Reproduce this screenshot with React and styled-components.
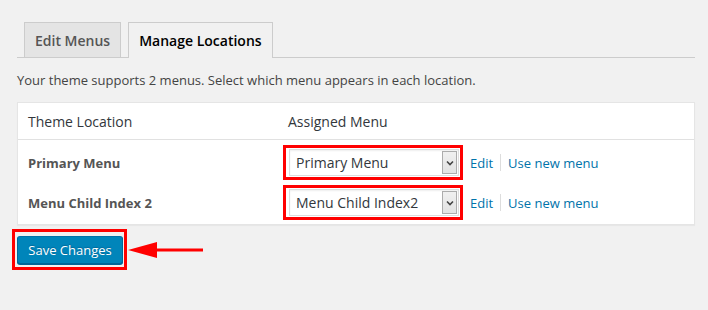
import React from 'react';
import styled, { createGlobalStyle } from 'styled-components';

const GlobalStyle = createGlobalStyle`
  html, body {
    margin: 0;
    background: #f1f1f1;
  }
  body {
    font-family: "Open Sans", "Liberation Sans", sans-serif;
    color: #444;
  }
`;

const Page = styled.div`
  padding: 22px 13px 0 17px;
  height: 310px;
  box-sizing: border-box;
`;

const TabBar = styled.div`
  display: flex;
  align-items: flex-end;
  border-bottom: 1px solid #ccc;
  padding-left: 7px;
  gap: 7px;
`;

const Tab = styled.div`
  box-sizing: border-box;
  padding: 0 10px;
  display: flex;
  align-items: center;
  border: 1px solid #ccc;
  border-bottom: none;
  font-size: 14px;
  font-weight: 600;
  margin-bottom: ${p => (p.$active ? '-1px' : '0')};
  height: ${p => (p.$active ? '36px' : '35px')};
  padding-bottom: ${p => (p.$active ? '1px' : '0')};
  background: ${p => (p.$active ? '#f1f1f1' : '#e4e4e4')};
  color: ${p => (p.$active ? '#000' : '#555')};
`;

const Intro = styled.p`
  margin: 13px 0 12px;
  font-size: 13px;
  line-height: 19px;
  color: #444;
`;

const Panel = styled.div`
  background: #fff;
  border: 1px solid #e5e5e5;
  box-shadow: 0 1px 1px rgba(0, 0, 0, 0.04);
`;

const HeadRow = styled.div`
  display: grid;
  grid-template-columns: 260px 1fr;
  height: 36px;
  align-items: center;
  border-bottom: 1px solid #e1e1e1;
  font-size: 14px;
  color: #32373c;
`;

const HeadCell = styled.div`
  padding: 0 10px;
`;

const Body = styled.div`
  display: flex;
  flex-direction: column;
  gap: 5px;
  padding: 5px 0 4px;
`;

const Row = styled.div`
  display: grid;
  grid-template-columns: 260px 1fr;
  align-items: center;
`;

const Label = styled.div`
  padding-left: 10px;
  font-size: 13px;
  font-weight: 700;
  color: #555;
`;

const Controls = styled.div`
  display: flex;
  align-items: center;
  padding-left: 5px;
`;

const Highlight = styled.div`
  display: inline-flex;
  border: 3px solid #f00;
  padding: ${p => p.$pad || '1px 1px 1px 3px'};
`;

const Select = styled.div`
  width: 170px;
  height: 27px;
  box-sizing: border-box;
  display: flex;
  align-items: center;
  justify-content: space-between;
  background: #fff;
  border: 1px solid #ddd;
  box-shadow: inset 0 1px 2px rgba(0, 0, 0, 0.07);
  padding: 1px 1px 1px 6px;
  font-size: 14px;
  color: #32373c;
`;

const Caret = styled.div`
  width: 15px;
  height: 23px;
  box-sizing: border-box;
  display: flex;
  align-items: center;
  justify-content: center;
  background: linear-gradient(#f0f0f0, #e2e2e2);
  border: 1px solid #acacac;
`;

const Links = styled.div`
  display: flex;
  align-items: center;
  margin-left: 7px;
  font-size: 13px;
`;

const Link = styled.a`
  color: #0073aa;
  text-decoration: none;
`;

const Sep = styled.span`
  width: 1px;
  height: 17px;
  background: #ddd;
  margin: 0 7px;
`;

const Footer = styled.div`
  display: flex;
  align-items: center;
  margin-top: 4px;
  margin-left: -5px;
`;

const Button = styled.button`
  width: 106px;
  height: 28px;
  box-sizing: border-box;
  padding: 0;
  background: #0085ba;
  border: 1px solid;
  border-color: #0073aa #006799 #006799;
  border-radius: 3px;
  box-shadow: 0 1px 0 #006799;
  color: #fff;
  font-family: "Open Sans", "Liberation Sans", sans-serif;
  font-size: 13px;
  text-shadow: 0 -1px 1px #006799;
`;

const Arrow = styled.svg`
  display: block;
  margin-left: 1px;
`;

function ChevronDown() {
  return (
    <svg width="8" height="6" viewBox="0 0 8 6">
      <path d="M1 1.5 L4 4.5 L7 1.5" fill="none" stroke="#444" strokeWidth="1.6" />
    </svg>
  );
}

const locations = [
  { name: 'Primary Menu', menu: 'Primary Menu' },
  { name: 'Menu Child Index 2', menu: 'Menu Child Index2' },
];

export default function App() {
  return (
    <>
      <GlobalStyle />
      <Page>
        <TabBar>
          <Tab>Edit Menus</Tab>
          <Tab $active>Manage Locations</Tab>
        </TabBar>
        <Intro>Your theme supports 2 menus. Select which menu appears in each location.</Intro>
        <Panel>
          <HeadRow>
            <HeadCell>Theme Location</HeadCell>
            <HeadCell>Assigned Menu</HeadCell>
          </HeadRow>
          <Body>
            {locations.map(loc => (
              <Row key={loc.name}>
                <Label>{loc.name}</Label>
                <Controls>
                  <Highlight>
                    <Select>
                      <span>{loc.menu}</span>
                      <Caret><ChevronDown /></Caret>
                    </Select>
                  </Highlight>
                  <Links>
                    <Link href="#">Edit</Link>
                    <Sep />
                    <Link href="#">Use new menu</Link>
                  </Links>
                </Controls>
              </Row>
            ))}
          </Body>
        </Panel>
        <Footer>
          <Highlight $pad="4px 1px 3px 2px">
            <Button>Save Changes</Button>
          </Highlight>
          <Arrow width="76" height="16" viewBox="0 0 76 16">
            <polygon points="0,8 29,0 29,16" fill="#f00" />
            <rect x="28" y="6.5" width="47" height="3" fill="#f00" />
          </Arrow>
        </Footer>
      </Page>
    </>
  );
}
